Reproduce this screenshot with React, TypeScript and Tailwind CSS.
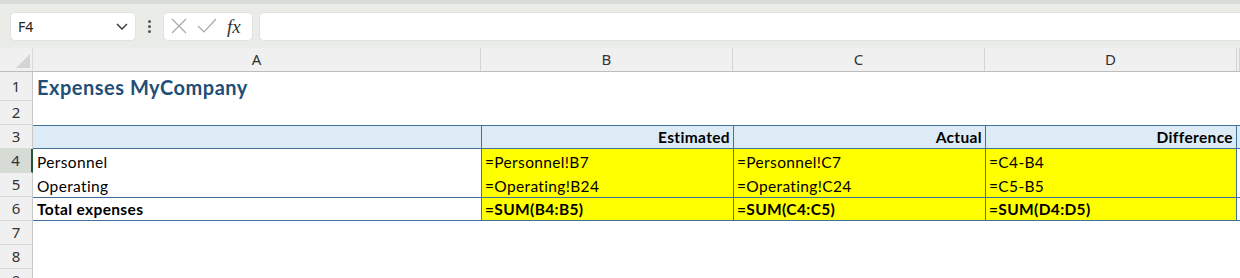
import React from "react";

const cal = { fontFamily: "Lato, 'Noto Sans', sans-serif", letterSpacing: "0.35px" } as React.CSSProperties;

const cols = [
  { key: "A", w: "w-[448px]" },
  { key: "B", w: "w-[252px]" },
  { key: "C", w: "w-[252px]" },
  { key: "D", w: "w-[252px]" },
  { key: "", w: "flex-1" },
];

function RowHead({ n, h, sel }: { n: number; h: string; sel?: boolean }) {
  return (
    <div
      className={`${h} w-[33px] shrink-0 flex items-center justify-center text-[15px] leading-none text-[#333] border-b border-[#dadada] ${
        sel ? "bg-[#d6dbd5] border-r-2 border-r-[#1e5631]" : "bg-[#f0f0f0] border-r border-r-[#c8c8c8]"
      }`}
      style={{ fontFamily: "'Noto Sans', sans-serif" }}
    >
      {n}
    </div>
  );
}

export default function App() {
  const bd = "border-[#41719c]";
  const cell = "flex items-end pb-[2px]";
  return (
    <div className="w-[1240px] h-[278px] overflow-hidden bg-white select-none" style={{ fontFamily: "'Noto Sans', sans-serif" }}>
      {/* toolbar */}
      <div className="h-[48px] bg-[#e9ece7] border-t-[4px] border-[#d9dbd8] flex items-center">
        <div className="ml-[10px] w-[126px] h-[29px] bg-white rounded-[5px] border border-[#e2e2e2] flex items-center justify-between pl-[7px] pr-[6px]">
          <span className="text-[14px] text-[#222]">F4</span>
          <svg width="14" height="10" viewBox="0 0 14 10" fill="none">
            <path d="M2 3l5 5 5-5" stroke="#333" strokeWidth="1.4" />
          </svg>
        </div>
        <div className="w-[27px] flex flex-col items-center gap-[2px]">
          <span className="w-[3px] h-[3px] bg-[#555] rounded-full" />
          <span className="w-[3px] h-[3px] bg-[#555] rounded-full" />
          <span className="w-[3px] h-[3px] bg-[#555] rounded-full" />
        </div>
        <div className="w-[90px] h-[29px] bg-white rounded-[5px] border border-[#e2e2e2] flex items-center pl-[7px] gap-[10px]">
          <svg width="16" height="16" viewBox="0 0 16 16" fill="none">
            <path d="M1 1l14 14M15 1L1 15" stroke="#a8a8a8" strokeWidth="1.2" />
          </svg>
          <svg width="20" height="16" viewBox="0 0 20 16" fill="none">
            <path d="M1 8l6 6L19 1" stroke="#a8a8a8" strokeWidth="1.2" />
          </svg>
          <span className="text-[19px] italic text-[#333] leading-none" style={{ fontFamily: "'Liberation Serif', serif" }}>
            fx
          </span>
        </div>
        <div className="ml-[6px] flex-1 h-[29px] bg-white rounded-l-[5px] border border-r-0 border-[#e2e2e2]" />
      </div>

      {/* column header */}
      <div className="flex h-[24px] bg-[#f0f0f0] border-b border-[#bdbdbd]">
        <div className="w-[33px] shrink-0 relative border-r border-[#dadada]">
          <svg className="absolute right-[2px] bottom-[3px]" width="14" height="14" viewBox="0 0 14 14">
            <path d="M14 0V14H0Z" fill="#d4d4d4" />
          </svg>
        </div>
        {cols.map((c, i) => (
          <div key={i} className={`${c.w} shrink-0 flex items-center justify-center text-[15px] leading-none text-[#333] border-r border-[#d4d4d4]`}>
            {c.key}
          </div>
        ))}
      </div>

      {/* row 1 */}
      <div className="flex h-[29px]">
        <RowHead n={1} h="h-[29px]" />
        <div className="flex-1 h-[29px] flex items-end pb-[3px] pl-[4px] text-[20px] leading-[22px] font-bold text-[#1f4e78]" style={{ ...cal, letterSpacing: "0.5px" }}>
          Expenses MyCompany
        </div>
      </div>
      {/* row 2 */}
      <div className="flex h-[24px]">
        <RowHead n={2} h="h-[24px]" />
        <div className="flex-1" />
      </div>
      {/* row 3 */}
      <div className="flex h-[24px]">
        <RowHead n={3} h="h-[24px]" />
        <div className={`flex-1 h-[24px] flex bg-[#ddebf7] border-y ${bd} text-[15.5px] leading-[18px] font-bold text-black`} style={cal}>
          <div className="w-[448px] shrink-0" />
          <div className={`w-[252px] shrink-0 border-l ${bd} ${cell} justify-end pr-[3px]`}>Estimated</div>
          <div className={`w-[252px] shrink-0 border-l ${bd} ${cell} justify-end pr-[3px]`}>Actual</div>
          <div className={`w-[252px] shrink-0 border-x ${bd} ${cell} justify-end pr-[3px]`}>Difference</div>
          <div className="flex-1" />
        </div>
      </div>
      {/* row 4 & 5 */}
      {[
        { n: 4, a: "Personnel", b: "=Personnel!B7", c: "=Personnel!C7", d: "=C4-B4", sel: true },
        { n: 5, a: "Operating", b: "=Operating!B24", c: "=Operating!C24", d: "=C5-B5" },
      ].map((r) => (
        <div key={r.n} className="flex h-[24px]">
          <RowHead n={r.n} h="h-[24px]" sel={r.sel} />
          <div className="flex-1 h-[24px] flex text-[15.5px] leading-[18px] text-black" style={cal}>
            <div className={`w-[448px] shrink-0 ${cell} pl-[4px]`}>{r.a}</div>
            <div className={`w-[252px] shrink-0 bg-[#ffff00] border-l ${bd} ${cell} pl-[3px]`}>{r.b}</div>
            <div className={`w-[252px] shrink-0 bg-[#ffff00] border-l ${bd} ${cell} pl-[3px]`}>{r.c}</div>
            <div className={`w-[252px] shrink-0 bg-[#ffff00] border-x ${bd} ${cell} pl-[3px]`}>{r.d}</div>
            <div className="flex-1" />
          </div>
        </div>
      ))}
      {/* row 6 */}
      <div className="flex h-[24px]">
        <RowHead n={6} h="h-[24px]" />
        <div className={`flex-1 h-[24px] flex border-y ${bd} text-[15.5px] leading-[18px] font-bold text-black`} style={cal}>
          <div className={`w-[448px] shrink-0 ${cell} pl-[4px]`}>Total expenses</div>
          <div className={`w-[252px] shrink-0 bg-[#ffff00] border-l ${bd} ${cell} pl-[3px]`}>=SUM(B4:B5)</div>
          <div className={`w-[252px] shrink-0 bg-[#ffff00] border-l ${bd} ${cell} pl-[3px]`}>=SUM(C4:C5)</div>
          <div className={`w-[252px] shrink-0 bg-[#ffff00] border-x ${bd} ${cell} pl-[3px]`}>=SUM(D4:D5)</div>
          <div className="flex-1" />
        </div>
      </div>
      {[7, 8, 9].map((n) => (
        <div key={n} className="flex h-[24px]">
          <RowHead n={n} h="h-[24px]" />
          <div className="flex-1" />
        </div>
      ))}
    </div>
  );
}
